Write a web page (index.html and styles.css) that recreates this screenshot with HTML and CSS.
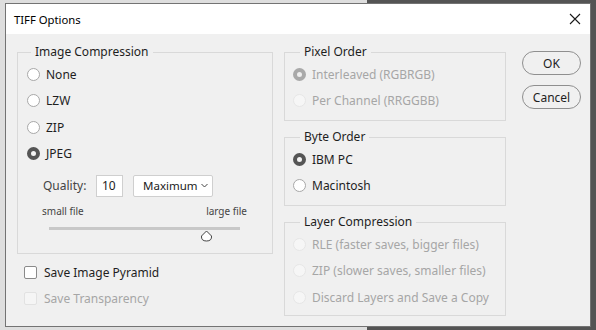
FILE: index.html
```html
<!DOCTYPE html>
<html lang="en">
<head>
  <meta charset="UTF-8">
  <title>TIFF Options</title>
  <link rel="stylesheet" href="styles.css">
</head>
<body>
  <div class="dialog">
    <div class="titlebar">
      <span class="title">TIFF Options</span>
      <svg class="close" width="12" height="12" viewBox="0 0 12 12">
        <path d="M1 1 L11 11 M11 1 L1 11" stroke="#1a1a1a" stroke-width="1.1" fill="none"/>
      </svg>
    </div>

    <div class="content">
      <!-- left column -->
      <div class="col-left">
        <fieldset class="group group-image">
          <legend>Image Compression</legend>
          <div class="option"><span class="radio"></span>None</div>
          <div class="option"><span class="radio"></span>LZW</div>
          <div class="option"><span class="radio"></span>ZIP</div>
          <div class="option"><span class="radio checked"></span>JPEG</div>

          <div class="quality">
            <span class="quality-label">Quality:</span>
            <span class="num-box">10</span>
            <span class="select">Maximum
              <svg width="7" height="5" viewBox="0 0 7 5"><path d="M0.5 1 L3.5 4 L6.5 1" stroke="#444" fill="none"/></svg>
            </span>
          </div>
          <div class="size-labels">
            <span>small file</span>
            <span>large file</span>
          </div>
          <div class="slider">
            <div class="track"></div>
            <svg class="thumb" style="left: 82%" width="13" height="12" viewBox="0 0 13 12">
              <path d="M6.5 1 L11.5 6 Q12 11 6.5 11 Q1 11 1.5 6 Z" fill="#fff" stroke="#444" stroke-width="1"/>
            </svg>
          </div>
        </fieldset>

        <div class="check-row"><span class="checkbox"></span>Save Image Pyramid</div>
        <div class="check-row disabled"><span class="checkbox"></span>Save Transparency</div>
      </div>

      <!-- right column -->
      <div class="col-right">
        <fieldset class="group">
          <legend>Pixel Order</legend>
          <div class="option disabled"><span class="radio checked"></span>Interleaved (RGBRGB)</div>
          <div class="option disabled"><span class="radio"></span>Per Channel (RRGGBB)</div>
        </fieldset>

        <fieldset class="group">
          <legend>Byte Order</legend>
          <div class="option"><span class="radio checked"></span>IBM PC</div>
          <div class="option"><span class="radio"></span>Macintosh</div>
        </fieldset>

        <fieldset class="group group-layers">
          <legend>Layer Compression</legend>
          <div class="option disabled"><span class="radio"></span>RLE (faster saves, bigger files)</div>
          <div class="option disabled"><span class="radio"></span>ZIP (slower saves, smaller files)</div>
          <div class="option disabled"><span class="radio"></span>Discard Layers and Save a Copy</div>
        </fieldset>
      </div>

      <!-- buttons -->
      <div class="buttons">
        <button class="btn">OK</button>
        <button class="btn">Cancel</button>
      </div>
    </div>
  </div>
</body>
</html>
```

FILE: styles.css
```css
html, body {
  margin: 0;
  height: 100%;
}

body {
  font-family: "Noto Sans", "Open Sans", sans-serif;
  font-size: 12px;
  color: #1e1e1e;
  background: linear-gradient(to right, #dedede 367px, #545454 367px);
  padding: 3px 5px;
  box-sizing: border-box;
}

.dialog {
  height: 324px;
  border: 1px solid #737373;
  background: #f0f0f0;
  box-sizing: border-box;
  display: flex;
  flex-direction: column;
}

.titlebar {
  height: 30px;
  background: #fff;
  display: flex;
  align-items: center;
  justify-content: space-between;
  padding: 0 8px 0 8px;
}

.title {
  font-size: 11.3px;
  color: #000;
}

.close {
  margin-right: 1px;
}

.content {
  display: flex;
  padding: 10px 0 0 11px;
}

.col-left {
  width: 256px;
}

.col-right {
  width: 222px;
  margin-left: 11px;
  display: flex;
  flex-direction: column;
  gap: 8px;
}

.group {
  margin: 0;
  padding: 1px 0 6px 8px;
  border: 1px solid #d9d9d9;
  min-width: 0;
}

.group legend {
  margin-left: 7px;
  padding: 0 4px;
  line-height: 16px;
  font-size: 12px;
  color: #1e1e1e;
}

.group-image {
  padding-left: 9px;
  padding-bottom: 0;
  height: 210px;
  box-sizing: border-box;
}

.group-image legend {
  margin-left: 4px;
}

.group-layers {
  padding-bottom: 4px;
}

.option {
  height: 26.5px;
  display: flex;
  align-items: center;
  gap: 6px;
  font-size: 12px;
}

.option.disabled {
  color: #a6a6a6;
}

.radio {
  width: 11px;
  height: 11px;
  border-radius: 50%;
  border: 1px solid #a8a8a8;
  background: #fff;
}

.radio.checked {
  width: 5px;
  height: 5px;
  border: 4px solid #555;
  background: #f4f4f4;
}

.option.disabled .radio {
  border-color: #e6e6e6;
  background: #f6f6f6;
}

.option.disabled .radio.checked {
  border-color: #a9a9a9;
  background: #eee;
}

.quality {
  display: flex;
  align-items: center;
  height: 23px;
  margin-top: 7px;
  padding-left: 16px;
  font-size: 12px;
}

.quality-label {
  color: #444;
  width: 53px;
}

.num-box {
  height: 20px;
  width: 20px;
  border: 1px solid #cfcfcf;
  background: #fff;
  line-height: 20px;
  padding-left: 5px;
}

.select {
  margin-left: 10px;
  width: 80px;
  height: 22px;
  border: 1px solid #cfcfcf;
  border-radius: 2px;
  background: #fff;
  display: flex;
  align-items: center;
  justify-content: space-between;
  padding: 0 4px 0 9px;
  box-sizing: border-box;
  font-size: 11.5px;
  color: #222;
}

.select svg {
  flex-shrink: 0;
}

.size-labels {
  display: flex;
  justify-content: space-between;
  margin-top: 8px;
  padding: 0 25px 0 15px;
  font-size: 10px;
  line-height: 12px;
  color: #444;
}

.slider {
  position: relative;
  margin: 10px 0 0 22px;
  width: 191px;
  height: 14px;
}

.track {
  height: 3px;
  background: #c8c8c8;
}

.thumb {
  position: absolute;
  top: 3px;
  margin-left: -6px;
}

.check-row {
  display: flex;
  align-items: center;
  gap: 7px;
  height: 26px;
  margin-top: 5px;
  padding-left: 7px;
  font-size: 12px;
}

.check-row + .check-row {
  margin-top: 0;
}

.checkbox {
  width: 11px;
  height: 11px;
  border: 1px solid #8a8a8a;
  border-radius: 2px;
  background: #fff;
}

.check-row.disabled {
  color: #a6a6a6;
}

.check-row.disabled .checkbox {
  border-color: #e2e2e2;
  background: #f5f5f5;
}

.buttons {
  margin-left: 16px;
  margin-top: 7px;
  display: flex;
  flex-direction: column;
  gap: 10px;
}

.btn {
  width: 59px;
  height: 24px;
  border: 1px solid #8f8f8f;
  border-radius: 12px;
  background: #f0f0f0;
  font-family: inherit;
  font-size: 12px;
  color: #1e1e1e;
  padding: 0;
}
```
